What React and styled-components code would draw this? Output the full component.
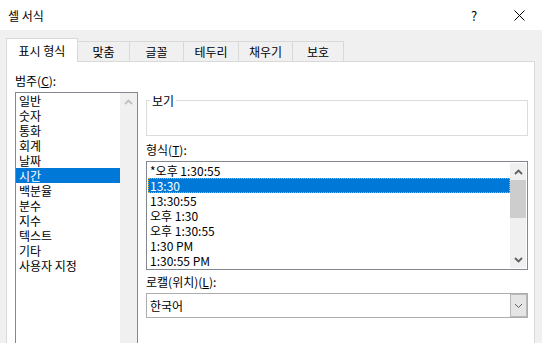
import styled, { createGlobalStyle } from 'styled-components';

const GlobalStyle = createGlobalStyle`
  html, body {
    margin: 0;
    padding: 0;
  }
  body {
    width: 542px;
    height: 343px;
    overflow: hidden;
    background: #f0f0f0;
    font-family: "Noto Sans CJK KR", "Noto Sans", sans-serif;
    font-size: 12px;
    color: #000;
  }
`;

const Window = styled.div`
  display: flex;
  flex-direction: column;
  width: 542px;
  height: 343px;
  overflow: hidden;
`;

const TitleBar = styled.div`
  display: flex;
  align-items: center;
  height: 30px;
  flex-shrink: 0;
  padding-left: 8px;
  background: #fff;
`;

const TitleText = styled.div`
  font-size: 12px;
  line-height: 15px;
`;

const CaptionButtons = styled.div`
  display: flex;
  margin-left: auto;
  height: 30px;
`;

const CaptionButton = styled.div`
  display: flex;
  align-items: center;
  justify-content: center;
  width: ${(p) => p.$width}px;
  height: 30px;
  font-size: 13px;
`;

const Body = styled.div`
  display: flex;
  flex-direction: column;
  flex: 1;
  min-height: 0;
  padding: 0 7px 0 6px;
`;

const TabRow = styled.div`
  display: flex;
  align-items: flex-end;
  height: 23px;
  margin-top: 8px;
  flex-shrink: 0;
`;

const Tab = styled.div`
  box-sizing: border-box;
  width: ${(p) => p.$width}px;
  height: ${(p) => (p.$active ? 24 : 20)}px;
  margin-left: ${(p) => (p.$first ? 0 : -1)}px;
  margin-bottom: ${(p) => (p.$active ? -1 : 0)}px;
  border: 1px solid #d9d9d9;
  border-bottom: none;
  background: ${(p) => (p.$active ? '#fff' : '#f0f0f0')};
  display: flex;
  align-items: center;
  justify-content: center;
  line-height: 15px;
  position: relative;
  z-index: ${(p) => (p.$active ? 2 : 1)};
`;

const Panel = styled.div`
  flex: 1;
  display: flex;
  gap: 8px;
  background: #fff;
  border: 1px solid #d9d9d9;
  border-bottom: none;
  padding: 11px 6px 0 8px;
`;

const LeftColumn = styled.div`
  display: flex;
  flex-direction: column;
  width: 123px;
  flex-shrink: 0;
`;

const RightColumn = styled.div`
  display: flex;
  flex-direction: column;
  flex: 1;
  min-width: 0;
`;

const Label = styled.div`
  line-height: 15px;
  height: 15px;
  margin-top: ${(p) => p.$top || 0}px;
  white-space: nowrap;
`;

const ListBox = styled.div`
  box-sizing: border-box;
  display: flex;
  margin-top: 4px;
  height: ${(p) => p.$height}px;
  padding: ${(p) => p.$pad}px;
  border: 1px solid #828790;
  background: #fff;
  flex-shrink: 0;
`;

const Items = styled.div`
  flex: 1;
  min-width: 0;
`;

const Row = styled.div`
  height: 15px;
  line-height: 15px;
  padding-left: ${(p) => p.$indent}px;
  white-space: nowrap;
  background: ${(p) => (p.$selected ? '#0078d7' : 'transparent')};
  color: ${(p) => (p.$selected ? '#fff' : '#000')};
  outline: ${(p) => (p.$focus ? '1px dotted #f5a623' : 'none')};
  outline-offset: -1px;
`;

const ScrollBar = styled.div`
  display: flex;
  flex-direction: column;
  width: ${(p) => p.$width}px;
  background: #f0f0f0;
  flex-shrink: 0;
`;

const ScrollArrow = styled.div`
  display: flex;
  align-items: center;
  justify-content: center;
  height: 17px;
  flex-shrink: 0;
`;

const ScrollThumb = styled.div`
  height: 38px;
  background: #cdcdcd;
`;

const ScrollTrack = styled.div`
  flex: 1;
`;

const Group = styled.fieldset`
  margin: 20px 0 0;
  padding: 0;
  min-width: 0;
  border: 1px solid #dcdcdc;
`;

const GroupLegend = styled.legend`
  margin-left: 3px;
  padding: 0 2px;
  line-height: 15px;
`;

const Preview = styled.div`
  height: 27px;
`;

const Combo = styled.div`
  box-sizing: border-box;
  display: flex;
  align-items: stretch;
  height: 25px;
  margin-top: 4px;
  border: 1px solid #adadad;
  background: #fff;
`;

const ComboText = styled.div`
  flex: 1;
  display: flex;
  align-items: center;
  padding-left: 3px;
  line-height: 15px;
`;

const ComboButton = styled.div`
  box-sizing: border-box;
  width: 17px;
  display: flex;
  align-items: center;
  justify-content: center;
  background: #e5e5e5;
  border: 1px solid #b9b9b9;
`;

const Chevron = ({ up, color, weight = 1.8 }) => (
  <svg width="9" height="6" viewBox="0 0 9 6">
    <polyline
      points={up ? '1,5 4.5,1.5 8,5' : '1,1 4.5,4.5 8,1'}
      fill="none"
      stroke={color}
      strokeWidth={weight}
    />
  </svg>
);

const tabs = [
  { name: '표시 형식', width: 72 },
  { name: '맞춤', width: 53 },
  { name: '글꼴', width: 55 },
  { name: '테두리', width: 56 },
  { name: '채우기', width: 55 },
  { name: '보호', width: 52 },
];

const categories = [
  '일반', '숫자', '통화', '회계', '날짜', '시간',
  '백분율', '분수', '지수', '텍스트', '기타', '사용자 지정',
];

const formats = [
  '*오후 1:30:55', '13:30', '13:30:55', '오후 1:30',
  '오후 1:30:55', '1:30 PM', '1:30:55 PM',
];

export default function App() {
  return (
    <>
      <GlobalStyle />
      <Window>
        <TitleBar>
          <TitleText>셀 서식</TitleText>
          <CaptionButtons>
            <CaptionButton $width={46}>?</CaptionButton>
            <CaptionButton $width={45}>
              <svg width="11" height="11" viewBox="0 0 11 11">
                <path d="M0.5 0.5 L10.5 10.5 M10.5 0.5 L0.5 10.5" stroke="#000" strokeWidth="1" />
              </svg>
            </CaptionButton>
          </CaptionButtons>
        </TitleBar>

        <Body>
          <TabRow>
            {tabs.map((t, i) => (
              <Tab key={t.name} $width={t.width} $first={i === 0} $active={i === 0}>
                {t.name}
              </Tab>
            ))}
          </TabRow>

          <Panel>
            <LeftColumn>
              <Label>범주(<u>C</u>):</Label>
              <ListBox $height={262} $pad={0}>
                <Items>
                  {categories.map((c) => (
                    <Row key={c} $indent={3} $selected={c === '시간'}>{c}</Row>
                  ))}
                </Items>
                <ScrollBar $width={17}>
                  <ScrollArrow>
                    <Chevron up color="#c0c0c0" />
                  </ScrollArrow>
                  <ScrollTrack />
                </ScrollBar>
              </ListBox>
            </LeftColumn>

            <RightColumn>
              <Group>
                <GroupLegend>보기</GroupLegend>
                <Preview />
              </Group>

              <Label $top={6}>형식(<u>T</u>):</Label>
              <ListBox $height={109} $pad={1}>
                <Items>
                  {formats.map((f, i) => (
                    <Row key={f} $indent={2} $selected={i === 1} $focus={i === 1}>{f}</Row>
                  ))}
                </Items>
                <ScrollBar $width={16}>
                  <ScrollArrow>
                    <Chevron up color="#606060" />
                  </ScrollArrow>
                  <ScrollThumb />
                  <ScrollTrack />
                  <ScrollArrow>
                    <Chevron color="#606060" />
                  </ScrollArrow>
                </ScrollBar>
              </ListBox>

              <Label $top={4}>로캘(위치)(<u>L</u>):</Label>
              <Combo>
                <ComboText>한국어</ComboText>
                <ComboButton>
                  <Chevron color="#606060" weight={1} />
                </ComboButton>
              </Combo>
            </RightColumn>
          </Panel>
        </Body>
      </Window>
    </>
  );
}
